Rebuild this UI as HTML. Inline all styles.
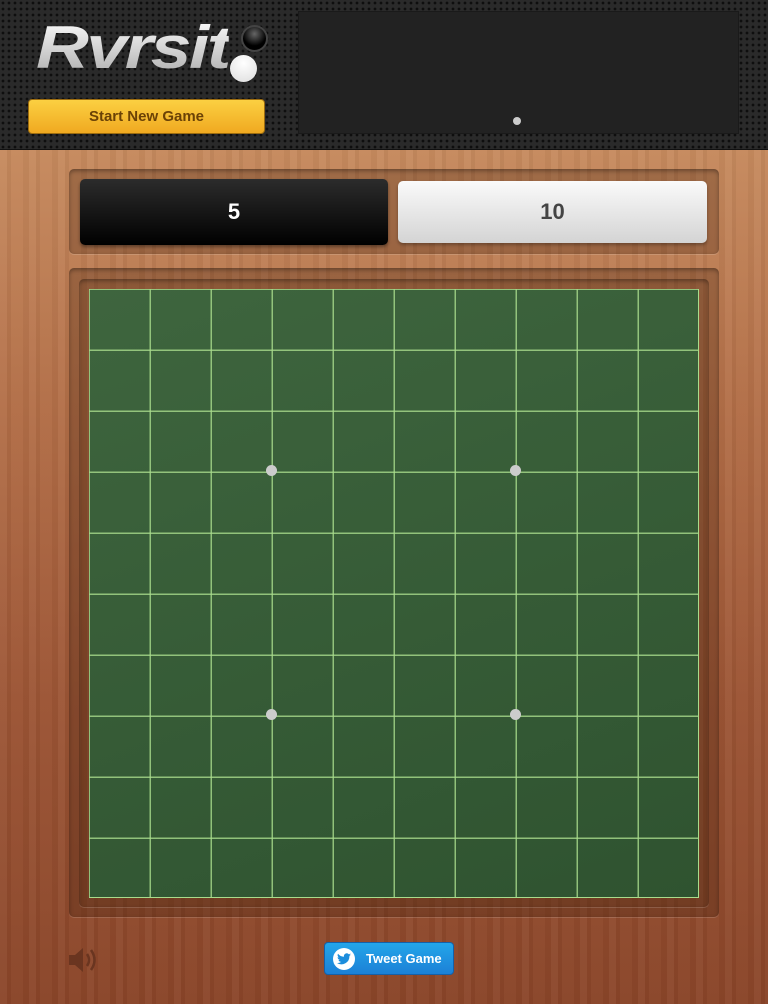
<!DOCTYPE html>
<html><head><style>
*{margin:0;padding:0;box-sizing:border-box}
body{width:768px;height:1004px;overflow:hidden;position:relative;font-family:"Liberation Sans",sans-serif;
background:linear-gradient(180deg,#c68a5e 150px,#b36f48 400px,#9c5535 700px,#8a4529 1004px);}
.wood{position:absolute;left:0;top:150px;width:768px;height:854px;
background:repeating-linear-gradient(90deg,rgba(255,255,255,.04) 0 7px,rgba(0,0,0,.04) 7px 11px,rgba(255,255,255,.02) 11px 23px,rgba(0,0,0,.03) 23px 29px);}
.hdr{position:absolute;left:0;top:0;width:768px;height:150px;background-color:#2a2a2a;
background-image:radial-gradient(circle,#0e0e0e 1.2px,transparent 1.6px);background-size:6px 6px;border-bottom:1px solid #111}
.logo{position:absolute;left:36px;top:16px;font:italic 900 60px/64px "Liberation Sans",sans-serif;letter-spacing:-2px;
transform-origin:left top;transform:scaleX(1.22);
background:linear-gradient(#fff,#aaa);-webkit-background-clip:text;color:transparent;}
.bp{position:absolute;left:241px;top:25px;width:27px;height:27px;border-radius:50%;background:radial-gradient(circle at 50% 30%,#666,#000 60%);border:2px solid #444}
.wp{position:absolute;left:230px;top:55px;width:27px;height:27px;border-radius:50%;background:radial-gradient(circle at 50% 30%,#fff,#ddd)}
.btn{position:absolute;left:28px;top:99px;width:237px;height:35px;border-radius:4px;background:linear-gradient(#fbd042,#f0a921);border:1px solid #9c6c10;
color:#6b4206;font-weight:bold;font-size:15px;text-align:center;line-height:33px}
.panel{position:absolute;left:298px;top:11px;width:441px;height:123px;background:#222;border:1px solid #1a1a1a}
.pd{position:absolute;left:513px;top:117px;width:8px;height:8px;border-radius:50%;background:#ccc}
.frame{position:absolute;border-radius:5px;background:rgba(60,30,10,.28);box-shadow:inset 0 2px 4px rgba(0,0,0,.35),0 1px 0 rgba(255,255,255,.15)}
.s{position:absolute;border-radius:5px;text-align:center;font-weight:bold;font-size:22px}
.board{position:absolute;left:89px;top:289px;width:610px;height:609px;background:#39603a;
background-image:linear-gradient(90deg,rgba(169,220,140,.8) 1.5px,transparent 1.5px),linear-gradient(rgba(169,220,140,.8) 1.5px,transparent 1.5px),linear-gradient(160deg,#3e653e,#2f5330);
background-size:61px 61px,61px 61px,100% 100%;background-position:-0.5px 0,0 -0.5px,0 0;
border-right:1.5px solid #a9dc8c;border-bottom:1.5px solid #a9dc8c}
.dot{position:absolute;width:11px;height:11px;border-radius:50%;background:#ccc}
.tw{position:absolute;left:324px;top:942px;width:130px;height:33px;border-radius:4px;background:linear-gradient(#23a6ea,#1c80d6);border:1px solid #1560a8;
color:#fff;font-weight:bold;font-size:13px;line-height:31px;padding-left:41px}
.tw i{position:absolute;left:8px;top:5px;width:22px;height:22px;border-radius:50%;background:#fff}
.tw svg{position:absolute;left:12px;top:10px}
</style></head><body>
<div class="wood"></div>
<div class="hdr">
<div class="logo">Rvrsit</div><div class="bp"></div><div class="wp"></div>
<div class="btn">Start New Game</div>
<div class="panel"></div><div class="pd"></div>
</div>
<div class="frame" style="left:69px;top:169px;width:650px;height:85px"></div>
<div class="s" style="left:80px;top:179px;width:308px;height:66px;background:linear-gradient(#2c2c2c,#000);color:#fff;line-height:66px;box-shadow:0 2px 3px rgba(0,0,0,.4)">5</div>
<div class="s" style="left:398px;top:181px;width:309px;height:62px;background:linear-gradient(#fafafa,#d4d4d4);color:#444;line-height:62px;box-shadow:0 2px 3px rgba(0,0,0,.3)">10</div>
<div class="frame" style="left:69px;top:268px;width:650px;height:649px"></div>
<div class="frame" style="left:79px;top:279px;width:630px;height:628px;background:rgba(90,50,25,.2)"></div>
<div class="board"></div>
<div class="dot" style="left:266px;top:465px"></div><div class="dot" style="left:510px;top:465px"></div>
<div class="dot" style="left:266px;top:709px"></div><div class="dot" style="left:510px;top:709px"></div>
<svg style="position:absolute;left:68px;top:945px" width="30" height="30" viewBox="0 0 30 30"><path d="M1 10h6l8-7v24l-8-7H1z" fill="#6a3520"/><path d="M19 9q4 6 0 12M23 5q7 10 0 20" stroke="#6a3520" stroke-width="2.5" fill="none"/></svg>
<div class="tw"><i></i><svg width="14" height="12" viewBox="0 0 14 12"><path d="M14 1.5q-.8.4-1.6.5.9-.6 1.2-1.5-.8.5-1.8.7A2.8 2.8 0 0 0 7 3.7 8 8 0 0 1 1 .7a2.8 2.8 0 0 0 .9 3.8q-.7 0-1.3-.4 0 2.2 2.2 2.8-.6.2-1.3 0 .6 1.9 2.7 2A5.7 5.7 0 0 1 0 10a8 8 0 0 0 12.4-7.1q.9-.6 1.6-1.4z" fill="#1c8ddc"/></svg>Tweet Game</div>
</body></html>
